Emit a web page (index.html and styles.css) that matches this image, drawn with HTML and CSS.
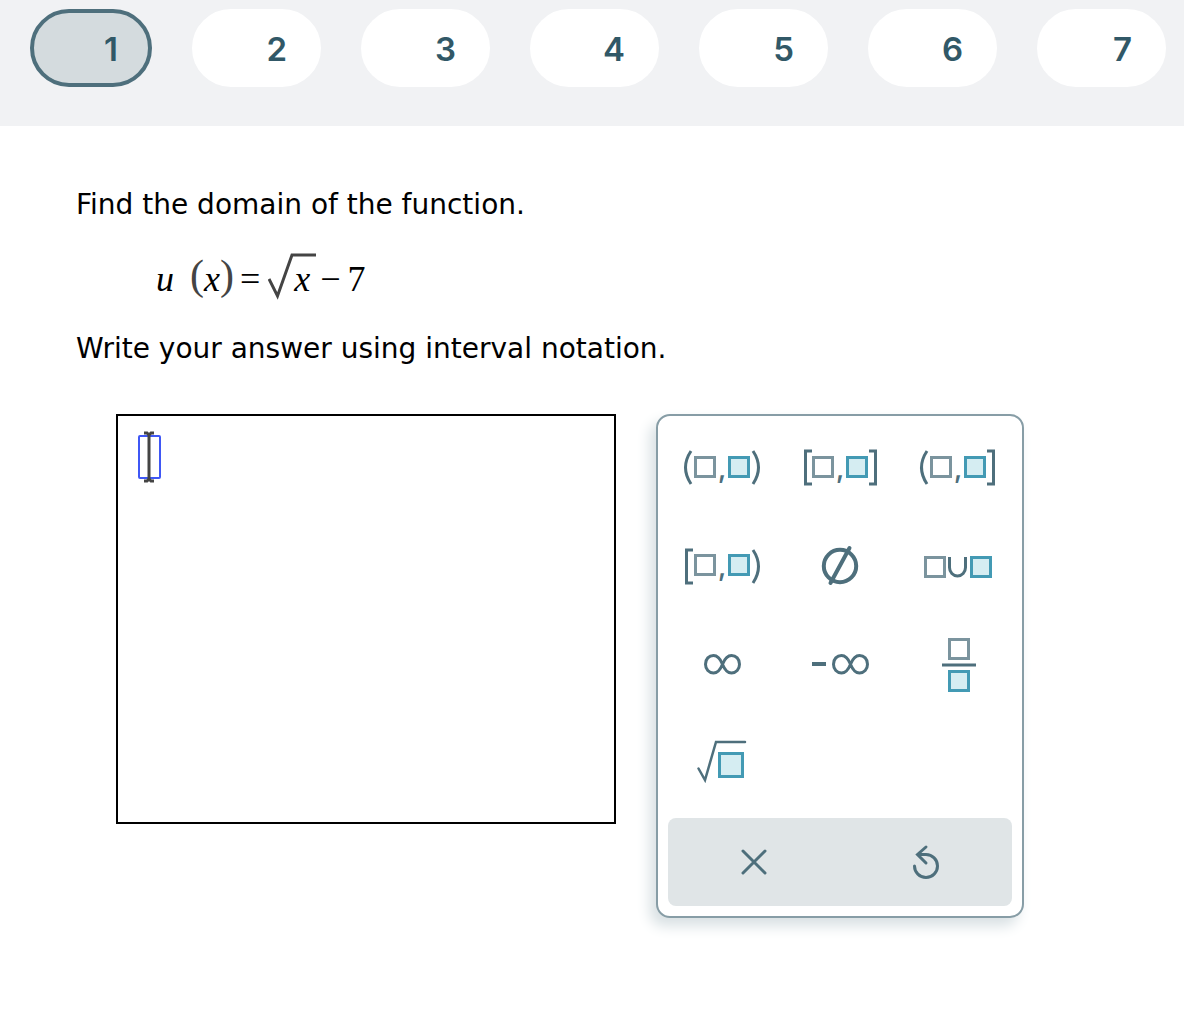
FILE: index.html
```html
<!DOCTYPE html>
<html lang="en">
<head>
<meta charset="utf-8">
<meta name="viewport" content="width=device-width, initial-scale=1">
<title>Domain of a function</title>
<link rel="stylesheet" href="styles.css">
</head>
<body>
<nav class="questions" aria-label="Questions">
  <button class="question current" type="button" aria-current="step">1</button>
  <button class="question" type="button">2</button>
  <button class="question" type="button">3</button>
  <button class="question" type="button">4</button>
  <button class="question" type="button">5</button>
  <button class="question" type="button">6</button>
  <button class="question" type="button">7</button>
</nav>
<main class="problem">
  <p class="prompt">Find the domain of the function.</p>
  <div class="equation">
    <i class="name">u</i>
    <span class="group"><span class="paren">(</span><i>x</i><span class="paren">)</span></span>
    <span class="equals">=</span>
    <span class="root"><svg class="radical" viewBox="0 0 48 48" aria-label="square root of"><path d="M1 26L9.500 43L24 2H48"/></svg><i class="radicand">x</i></span>
    <span class="minus">−</span>
    <span>7</span>
  </div>
  <p class="prompt">Write your answer using interval notation.</p>
  <div class="workspace">
    <div class="answer">
      <div class="slot">
        <input class="entry" type="text" aria-label="Answer">
        <svg class="caret" viewBox="0 0 12 52" aria-hidden="true"><path d="M6 3V49M1 2H4L6 4L8 2H11M1 50H4L6 48L8 50H11"/></svg>
      </div>
    </div>
    <section class="keypad" aria-label="Math keypad">
      <div class="keys">
        <button class="key" type="button" aria-label="Open interval">
          <svg viewBox="0 0 118 98"><path class="line" d="M28 33Q17 49.500 28 66M90 33Q101 49.500 90 66"/><rect class="box" x="32.500" y="39.500" width="19" height="19"/><text x="55" y="60">,</text><rect class="box filled" x="66.500" y="39.500" width="19" height="19"/></svg>
        </button>
        <button class="key" type="button" aria-label="Closed interval">
          <svg viewBox="0 0 118 98"><path class="line" d="M31 33H24.500V66H31M88 33H94.500V66H88"/><rect class="box" x="32.500" y="39.500" width="19" height="19"/><text x="55" y="60">,</text><rect class="box filled" x="66.500" y="39.500" width="19" height="19"/></svg>
        </button>
        <button class="key" type="button" aria-label="Left-open interval">
          <svg viewBox="0 0 118 98"><path class="line" d="M28 33Q17 49.500 28 66M88 33H94.500V66H88"/><rect class="box" x="32.500" y="39.500" width="19" height="19"/><text x="55" y="60">,</text><rect class="box filled" x="66.500" y="39.500" width="19" height="19"/></svg>
        </button>
        <button class="key" type="button" aria-label="Right-open interval">
          <svg viewBox="0 0 118 98"><path class="line" d="M30 34H23.500V67H30M90 34Q101 50.500 90 67"/><rect class="box" x="32.500" y="39.500" width="19" height="19"/><text x="55" y="60">,</text><rect class="box filled" x="66.500" y="39.500" width="19" height="19"/></svg>
        </button>
        <button class="key" type="button" aria-label="Empty set">
          <svg viewBox="0 0 118 98"><circle class="line bold" cx="59" cy="50" r="16.200"/><path class="line bold" d="M68.500 32L49.500 67"/></svg>
        </button>
        <button class="key" type="button" aria-label="Union">
          <svg viewBox="0 0 118 98"><rect class="box" x="26.500" y="41.500" width="19" height="19"/><path class="line" d="M50.500 41V51.500A8 8.500 0 0 0 66.500 51.500V41"/><rect class="box filled" x="72.500" y="41.500" width="19" height="19"/></svg>
        </button>
        <button class="key" type="button" aria-label="Infinity">
          <svg viewBox="0 0 118 98"><path class="line" d="M59.500 50.200C57 44 54 41.500 50.500 41.500C46 41.500 42.500 45 42.500 50.200S46 59 50.500 59C54 59 57 56.500 59.500 50.200C62 44 65 41.500 68.500 41.500C73 41.500 76.500 45 76.500 50.200S73 59 68.500 59C65 59 62 56.500 59.500 50.200Z"/></svg>
        </button>
        <button class="key" type="button" aria-label="Negative infinity">
          <svg viewBox="0 0 118 98"><path class="line bold flat" d="M31 50H45"/><path class="line" transform="translate(10 0)" d="M59.500 50.200C57 44 54 41.500 50.500 41.500C46 41.500 42.500 45 42.500 50.200S46 59 50.500 59C54 59 57 56.500 59.500 50.200C62 44 65 41.500 68.500 41.500C73 41.500 76.500 45 76.500 50.200S73 59 68.500 59C65 59 62 56.500 59.500 50.200Z"/></svg>
        </button>
        <button class="key" type="button" aria-label="Fraction">
          <svg viewBox="0 0 118 98"><rect class="box" x="50.500" y="25.500" width="19" height="19"/><path class="line" d="M43 51H77"/><rect class="box filled" x="50.500" y="57.500" width="19" height="19"/></svg>
        </button>
        <button class="key" type="button" aria-label="Square root">
          <svg viewBox="0 0 118 98"><path class="line thin" d="M35.500 56.500L42 68L53 30H82"/><rect class="box filled" x="56.500" y="41.500" width="23" height="23"/></svg>
        </button>
      </div>
      <div class="actions">
        <button class="action" type="button" aria-label="Clear">
          <svg viewBox="0 0 36 36"><path class="line" d="M7 7L29 29M29 7L7 29"/></svg>
        </button>
        <button class="action" type="button" aria-label="Undo">
          <svg viewBox="0 0 36 36"><path class="line" d="M6.500 22A11.500 11.500 0 1 0 18 10.500H10M18 3L9.500 10.500L18 19"/></svg>
        </button>
      </div>
    </section>
  </div>
</main>
</body>
</html>
```
FILE: styles.css
```css
* {
  box-sizing: border-box;
}

body {
  margin: 0;
  background: #fff;
  color: #000;
  font-family: "DejaVu Sans", sans-serif;
}

button {
  margin: 0;
  padding: 0;
  border: 0;
  background: none;
  cursor: pointer;
}

svg {
  display: block;
  fill: none;
}

/* Question navigation */
.questions {
  display: flex;
  gap: 40px;
  padding: 9px 18px 39px 30px;
  background: #f1f2f4;
}

.question {
  flex: 1 1 0;
  height: 78px;
  padding: 2px 30px 0;
  border: 4px solid #fff;
  border-radius: 39px;
  background: #fff;
  color: #315867;
  font: 600 33px/48px Inter, sans-serif;
  text-align: right;
}

.question.current {
  flex: 0 0 122px;
  border-color: #4e6f7c;
  background: #d4dbde;
}

/* Problem statement */
.problem {
  padding: 61px 76px 104px;
}

.prompt {
  margin: 0;
  font-size: 28px;
  line-height: 36px;
}

.equation {
  display: flex;
  align-items: baseline;
  height: 108px;
  padding: 24px 0 0 80px;
  font: 36px/56px "Liberation Serif", serif;
}

.name {
  margin-right: 16px;
}

.group {
  margin-right: 6px;
}

.paren {
  color: #444;
  font-size: 42px;
  vertical-align: 2px;
}

.equals {
  margin-right: 8px;
}

.root {
  position: relative;
  padding: 0 4px 0 26px;
}

.radical {
  position: absolute;
  top: 2px;
  left: 0;
  width: 48px;
  height: 48px;
  stroke: #444;
  stroke-width: 3;
}

.minus {
  margin: 0 7px 0 6px;
}

/* Answer area and keypad */
.workspace {
  display: flex;
  align-items: flex-start;
  gap: 40px;
  padding: 47px 0 0 40px;
}

.answer {
  width: 500px;
  height: 410px;
  padding: 16px 20px;
  border: 2px solid #000;
}

.slot {
  position: relative;
  width: 23px;
  padding-top: 3px;
}

.entry {
  display: block;
  width: 23px;
  height: 44px;
  padding: 0;
  border: 2px solid #3f57f5;
  border-radius: 2px;
  outline: 0;
}

.caret {
  position: absolute;
  top: -1px;
  left: 5px;
  width: 12px;
  height: 52px;
  stroke: #444;
  stroke-width: 3;
}

.keypad {
  width: 368px;
  padding: 2px 5px 10px;
  border: 2px solid #879da6;
  border-radius: 14px;
  background: #fff;
  box-shadow: -6px 8px 14px #d8e0e3;
}

.keys {
  display: grid;
  grid-template-columns: repeat(3, 1fr);
}

.key svg {
  width: 100%;
  height: 98px;
}

.key text {
  fill: #4e6f7c;
  font: 600 26px Inter, sans-serif;
}

.line {
  stroke: #4e6f7c;
  stroke-width: 3;
}

.line.bold {
  stroke-width: 4;
  stroke-linecap: round;
}

.line.flat {
  stroke-linecap: butt;
}

.line.thin {
  stroke-width: 2.5;
  stroke-linecap: round;
}

.box {
  fill: #fff;
  stroke: #7b949e;
  stroke-width: 3;
}

.box.filled {
  fill: #d5edf2;
  stroke: #439ab4;
}

.actions {
  display: grid;
  grid-template-columns: 1fr 1fr;
  margin: 8px 5px 0;
  border-radius: 8px;
  background: #e0e5e7;
}

.action {
  display: flex;
  align-items: center;
  justify-content: center;
  height: 88px;
}

.action svg {
  width: 36px;
  height: 36px;
  stroke-linecap: round;
}
```
